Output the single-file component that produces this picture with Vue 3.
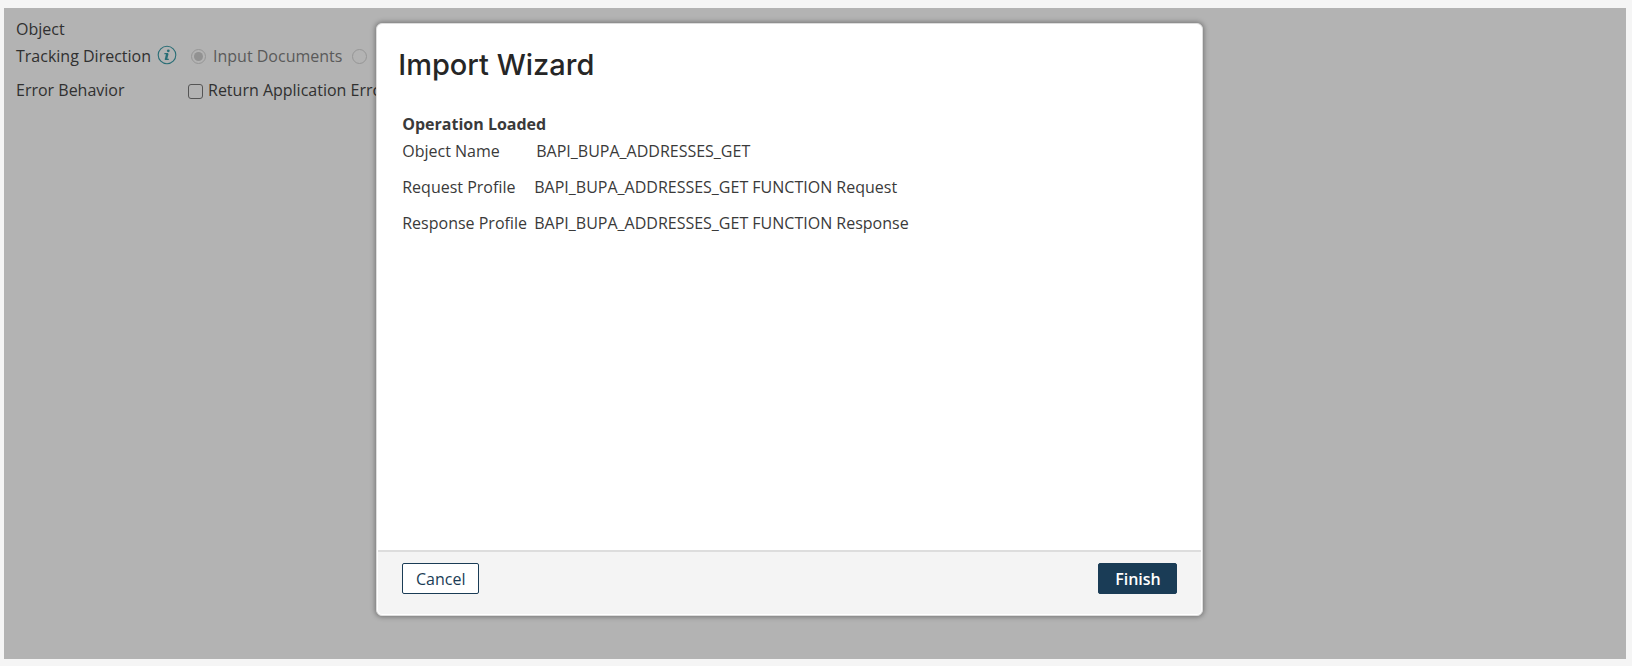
<script setup>
import { ref } from 'vue'

const direction = ref('input')
const returnErrors = ref(false)

const results = [
  { label: 'Object Name', value: 'BAPI_BUPA_ADDRESSES_GET', inset: true },
  { label: 'Request Profile', value: 'BAPI_BUPA_ADDRESSES_GET FUNCTION Request' },
  { label: 'Response Profile', value: 'BAPI_BUPA_ADDRESSES_GET FUNCTION Response' },
]
</script>

<template>
  <div class="page">
    <main class="panel">
      <form class="settings">
        <div class="row"><span class="name">Object</span></div>
        <div class="row row-tall">
          <span class="name">
            Tracking Direction
            <svg class="info" viewBox="0 0 20 20" aria-hidden="true">
              <circle cx="10" cy="9" r="8.8" fill="none" stroke="currentColor" stroke-width="1.1" />
              <circle cx="11.3" cy="4.8" r="1.4" fill="currentColor" />
              <path d="M10.4 7.4 9 13.2" fill="none" stroke="currentColor" stroke-width="2.4" />
              <path d="M7.4 7.6h3.6M7.8 13.4h4" fill="none" stroke="currentColor" stroke-width="1.1" />
            </svg>
          </span>
          <label class="radio"><input v-model="direction" type="radio" name="direction" value="input" disabled />Input Documents</label>
          <label class="radio"><input v-model="direction" type="radio" name="direction" value="output" aria-label="Output Documents" disabled /></label>
        </div>
        <div class="row row-tall">
          <span class="name name-wide">Error Behavior</span>
          <label class="check"><input v-model="returnErrors" type="checkbox" /><span>Return Application Error</span></label>
        </div>
      </form>

      <section class="dialog" role="dialog" aria-labelledby="wizard-title">
        <div class="body">
          <h1 id="wizard-title">Import Wizard</h1>
          <h2>Operation Loaded</h2>
          <dl>
            <div v-for="item in results" :key="item.label" class="result">
              <dt>{{ item.label }}</dt>
              <dd :class="{ inset: item.inset }">{{ item.value }}</dd>
            </div>
          </dl>
        </div>
        <footer>
          <button type="button" class="cancel">Cancel</button>
          <button type="button" class="finish">Finish</button>
        </footer>
      </section>
    </main>
  </div>
</template>

<style>
body {
  background: #f5f5f5;
}
</style>

<style scoped>
.page {
  box-sizing: border-box;
  height: 100vh;
  padding: 8px 6px 7px 4px;
  font-family: "Open Sans", "Noto Sans", sans-serif;
  font-size: 16px;
  line-height: 20px;
  color: #3a3a3a;
}

.panel {
  position: relative;
  height: 100%;
  overflow: hidden;
  background: #b3b3b3;
}

.settings {
  padding: 11px 12px;
  color: #303030;
  white-space: nowrap;
}

.row {
  display: flex;
  align-items: center;
  height: 20px;
}

.row-tall {
  height: 34px;
}

.name {
  display: flex;
  align-items: center;
  justify-content: space-between;
  flex: none;
  width: 165px;
}

.name-wide {
  width: 172px;
}

.info {
  width: 20px;
  height: 20px;
  margin-right: 4px;
  overflow: visible;
  color: #2a6e76;
}

.radio {
  display: flex;
  align-items: center;
  margin-left: 10px;
  color: #5a5a5a;
}

.radio input {
  appearance: none;
  box-sizing: border-box;
  width: 15px;
  height: 15px;
  margin: 0 7px 0 0;
  border: 1px solid #969696;
  border-radius: 50%;
}

.radio input:checked {
  padding: 2px;
  background: #929292;
  background-clip: content-box;
}

.check {
  display: flex;
  align-items: center;
}

.check input {
  appearance: none;
  box-sizing: border-box;
  width: 15px;
  height: 15px;
  margin: 2px 5px 0 0;
  border: 1px solid #555;
  border-radius: 3px;
}

.dialog {
  position: absolute;
  top: 15px;
  bottom: 43px;
  left: 22.95%;
  width: 51%;
  box-sizing: border-box;
  display: flex;
  flex-direction: column;
  padding: 1px;
  border: 1px solid #ddd;
  border-radius: 6px;
  background: #fff;
  box-shadow: 0 0 5px 1px rgba(0, 0, 0, 0.35);
}

.body {
  flex: 1;
  padding: 20px 24px;
}

h1 {
  margin: 0 0 29px -4px;
  font-family: Inter, sans-serif;
  font-size: 29px;
  font-weight: 500;
  line-height: 40px;
  color: #262626;
}

h2 {
  margin: 0 0 7px;
  font-size: 16px;
  line-height: 20px;
}

dl {
  display: grid;
  gap: 16px;
  margin: 0;
}

.result {
  display: flex;
}

dt {
  flex: none;
  width: 132px;
}

dd {
  margin: 0;
}

dd.inset {
  margin-left: 2px;
}

footer {
  display: flex;
  justify-content: space-between;
  padding: 11px 24px 20px;
  border-top: 2px solid #ddd;
  border-radius: 0 0 4px 4px;
  background: #f4f4f4;
}

button {
  box-sizing: border-box;
  height: 31px;
  padding: 0;
  border: 1px solid #1a3c56;
  border-radius: 2px;
  font-family: inherit;
  font-size: 16px;
  line-height: 20px;
}

.cancel {
  width: 77px;
  color: #1a3c56;
  background: #fff;
}

.finish {
  width: 79px;
  font-weight: 600;
  color: #fff;
  background: #1a3c56;
}
</style>
